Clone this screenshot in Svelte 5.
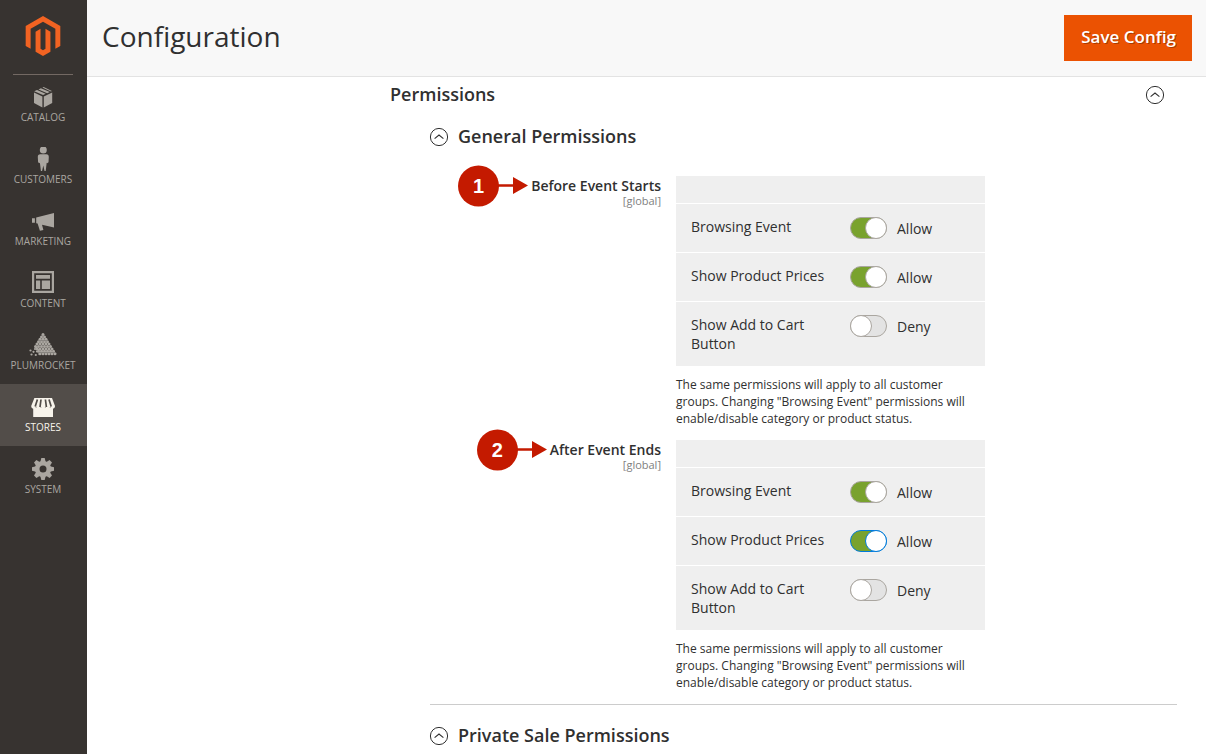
<script lang="ts">
  type Permission = { name: string; allow: boolean; active?: boolean };

  const menu = [
    { id: "catalog", label: "Catalog" },
    { id: "customers", label: "Customers" },
    { id: "marketing", label: "Marketing" },
    { id: "content", label: "Content" },
    { id: "plumrocket", label: "Plumrocket" },
    { id: "stores", label: "Stores" },
    { id: "system", label: "System" },
  ];
  const current = "stores";

  let fields: { id: string; label: string; step: number; rows: Permission[] }[] =
    $state([
      {
        id: "before",
        label: "Before Event Starts",
        step: 1,
        rows: [
          { name: "Browsing Event", allow: true },
          { name: "Show Product Prices", allow: true },
          { name: "Show Add to Cart Button", allow: false },
        ],
      },
      {
        id: "after",
        label: "After Event Ends",
        step: 2,
        rows: [
          { name: "Browsing Event", allow: true },
          { name: "Show Product Prices", allow: true, active: true },
          { name: "Show Add to Cart Button", allow: false },
        ],
      },
    ]);

  // Dots of the Plumrocket pyramid
  const dots: { x: number; y: number; r: number }[] = [];
  for (let row = 0; row < 9; row++) {
    for (let i = 0; i <= row; i++) {
      if (row > 5 && i < row - 5) continue;
      dots.push({ x: 14 + (i - row / 2) * 3, y: 1.5 + row * 2.4, r: 1.5 });
    }
  }
  const loose = [
    [6, 16], [8, 18.5], [4.5, 18.8], [1.5, 17.5], [10.5, 21],
    [6.8, 22], [2.5, 21.5], [10, 16.5], [7.5, 14.5],
  ];
  for (const [x, y] of loose) dots.push({ x, y, r: 1.1 });
</script>

{#snippet chevron()}
  <svg class="chevron" viewBox="0 0 20 20" width="20" height="20" fill="none" stroke="currentColor" aria-hidden="true">
    <circle cx="10" cy="10" r="8.6" stroke-width="1" />
    <path d="M5.6 11.6 10 8l4.4 3.6" stroke-width="1.1" />
  </svg>
{/snippet}

{#snippet icon(id: string)}
  <svg class="menu-icon" viewBox="0 0 28 24" width="28" height="24" fill="currentColor" aria-hidden="true">
    {#if id === "catalog"}
      <path d="M5 7.6 13.4 11.4V22.4L5 18zM23.2 7.6 14.8 11.4V22.4L23.2 18z" />
      <path d="M5.2 6.3 8 5l8.7 3.8-2.6 1.3zM9.5 4.4l2.4-1.1 8.9 3.7-2.6 1.2zM13.4 2.6l1.3-.5 8.2 3.8-1 .6z" />
    {:else if id === "customers"}
      <circle cx="14.3" cy="2.9" r="3.5" />
      <path d="M11.2 7.3h6.2c1.6 0 2.4 1 2.4 2.6l-.3 5.3-1.3 1.1-.5-.5-1 8.2h-1.2l-1.2-5.5-1.2 5.5h-1.2l-1-8.2-.5.5-1.3-1.1-.3-5.3c0-1.6.8-2.6 2.4-2.6z" />
    {:else if id === "marketing"}
      <path d="M3 9.2h2.9v4.6H3zM7.2 8.5 25 4v14.6l-12-2.8 1.4 5.3-3.5.7-2.3-7.2-1.4-.3z" />
    {:else if id === "content"}
      <path fill-rule="evenodd" d="M3 0h22v22H3zM5.2 2.2v17.6h17.6V2.2z" />
      <path d="M7 4h14v3.8H7zM7 9.4h4.2V18H7zM12.8 9.4H21V18h-8.2z" />
    {:else if id === "plumrocket"}
      {#each dots as dot}
        <circle cx={dot.x} cy={dot.y} r={dot.r} />
      {/each}
    {:else if id === "stores"}
      <path d="M4.2 12.5h19.8V22H4.2z" />
      <path d="M5.4 3h17.6l3 8c0 3.6-4.5 3.6-4.8.2-.4 3.4-4.6 3.4-4.8 0-.3 3.3-4.2 3.3-4.5 0-.3 3.4-4.4 3.4-4.8 0-.3 3.4-4.9 3.4-4.9-.2z" />
      <path d="m8.4 4.5-2.2 7M12 4.5l-1 7.5M16.4 4.5l1 7.5M20 4.5l2.2 7" stroke="#524d49" stroke-width="1.7" />
    {:else}
      <g transform="translate(14 12)">
        {#each [0, 45, 90, 135, 180, 225, 270, 315] as angle}
          <path d="M-2.7-7-1.7-11h3.4L2.7-7z" transform="rotate({angle})" />
        {/each}
        <circle r="5.8" fill="none" stroke="currentColor" stroke-width="4.6" />
      </g>
    {/if}
  </svg>
{/snippet}

<div class="page">
  <aside class="sidebar">
    <a class="logo" href="#dashboard" aria-label="Dashboard">
      <svg viewBox="0 0 24 24" width="40" height="40" fill="#f26322" aria-hidden="true">
        <path d="M12 24l-4.455-2.572v-12l2.97-1.715v12.001l1.485.902 1.485-.902V7.713l2.971 1.715v12L12 24zM22.391 6v12l-2.969 1.714V7.713L12 3.43 4.574 7.713v12.001L1.609 18V6L12 0l10.391 6z" />
      </svg>
    </a>
    <nav>
      {#each menu as item (item.id)}
        <a class="menu-item" class:current={item.id === current} href="#{item.id}">
          {@render icon(item.id)}
          <span>{item.label}</span>
        </a>
      {/each}
    </nav>
  </aside>

  <div class="main">
    <header class="page-header">
      <h1>Configuration</h1>
      <button class="save" type="button">Save Config</button>
    </header>

    <main class="config">
      <button class="section-toggle" type="button" aria-expanded="true">
        <span>Permissions</span>
        {@render chevron()}
      </button>

      <section class="group">
        <button class="group-toggle" type="button" aria-expanded="true">
          {@render chevron()}
          <span>General Permissions</span>
        </button>

        <div class="fields">
          {#each fields as field (field.id)}
            <div class="field">
              <div class="field-label">
                <div class="field-name" id="{field.id}-label">
                  <span class="callout">
                    <span class="callout-number">{field.step}</span>
                    <svg viewBox="0 0 30 18" width="30" height="18" fill="#c41a00" aria-hidden="true">
                      <path d="M0 7.7h15V.5L30 9 15 17.5v-7.2H0z" />
                    </svg>
                  </span>
                  {field.label}
                </div>
                <div class="scope">[global]</div>
              </div>

              <div class="field-value">
                <table aria-labelledby="{field.id}-label">
                  <thead>
                    <tr><td></td><td></td></tr>
                  </thead>
                  <tbody>
                    {#each field.rows as row, i}
                      <tr>
                        <td>{row.name}</td>
                        <td>
                          <label class="switch" class:active={row.active}>
                            <input type="checkbox" bind:checked={row.allow} id="{field.id}-{i}" />
                            <span>{row.allow ? "Allow" : "Deny"}</span>
                          </label>
                        </td>
                      </tr>
                    {/each}
                  </tbody>
                </table>
                <p class="note">
                  The same permissions will apply to all customer groups. Changing
                  "Browsing Event" permissions will enable/disable category or
                  product status.
                </p>
              </div>
            </div>
          {/each}
        </div>
      </section>

      <section class="group">
        <button class="group-toggle" type="button" aria-expanded="true">
          {@render chevron()}
          <span>Private Sale Permissions</span>
        </button>
      </section>
    </main>
  </div>
</div>

<style>
  :global(body) {
    background: #fff;
    color: #303030;
    font-family: "Open Sans", "Noto Sans", sans-serif;
    font-size: 14px;
    line-height: 19px;
  }

  .page {
    display: grid;
    grid-template-columns: 87px minmax(0, 1fr);
    min-height: 100vh;
  }

  button {
    border: none;
    background: none;
    padding: 0;
    font: inherit;
    color: inherit;
    cursor: pointer;
  }

  /* Sidebar */
  .sidebar {
    background: #373330;
  }

  .logo {
    display: flex;
    justify-content: center;
    margin: 0 14px 0 13px;
    padding: 16px 0 18px;
    border-bottom: 1px solid #736963;
  }

  nav {
    margin-top: -1px;
  }

  .menu-item {
    display: flex;
    flex-direction: column;
    align-items: center;
    gap: 1px;
    height: 51px;
    padding: 11px 1px 0 0;
    color: #aaa6a0;
    font-size: 10px;
    line-height: 14px;
    text-decoration: none;
    text-transform: uppercase;
  }

  .menu-item.current {
    background: #524d49;
    color: #f7f3eb;
  }

  /* Header */
  .page-header {
    display: flex;
    align-items: flex-start;
    justify-content: space-between;
    padding: 15px 14px 15px 15px;
    background: #f8f8f8;
    border-bottom: 1px solid #e3e3e3;
  }

  h1 {
    margin: 0;
    font-size: 28px;
    font-weight: 400;
    line-height: 42px;
  }

  .save {
    padding: 0 16px 2px 17px;
    background: #eb5202;
    color: #fff;
    font-size: 17px;
    font-weight: 600;
    line-height: 44px;
    text-shadow: 1px 1px 0 rgba(0, 0, 0, 0.3);
  }

  /* Sections */
  .config {
    padding: 5px 29px 0 303px;
  }

  .section-toggle,
  .group-toggle {
    display: flex;
    align-items: center;
    font-size: 18px;
    font-weight: 600;
    line-height: 24px;
  }

  .section-toggle {
    justify-content: space-between;
    width: 100%;
    padding-right: 12px;
  }

  .chevron {
    position: relative;
    top: 1px;
  }

  .group {
    margin-left: 40px;
    padding-top: 18px;
  }

  .group + .group {
    border-top: 1px solid #ccc;
  }

  .group-toggle {
    gap: 9px;
    margin-left: -1px;
  }

  .fields {
    display: grid;
    gap: 13px;
    padding: 28px 0 13px;
  }

  .field {
    display: grid;
    grid-template-columns: 231fr 309fr 177fr;
    gap: 15px;
  }

  .field-label {
    text-align: right;
  }

  .field-name {
    position: relative;
    display: inline-block;
    font-weight: 600;
  }

  .scope {
    color: #808080;
    font-size: 11px;
    line-height: 12px;
  }

  .callout {
    position: absolute;
    right: 100%;
    top: 50%;
    display: flex;
    align-items: center;
    margin-right: 3px;
    transform: translateY(-50%);
  }

  .callout-number {
    width: 41px;
    border-radius: 50%;
    background: #c41a00;
    color: #fff;
    font: bold 20px/41px "Liberation Sans", Arial, sans-serif;
    text-align: center;
  }

  .callout svg {
    margin-left: -1px;
  }

  table {
    width: 100%;
    table-layout: fixed;
    border-spacing: 0;
    background: #efefef;
  }

  td {
    padding: 13px 8px 13px 15px;
    vertical-align: top;
  }

  td + td {
    box-sizing: border-box;
    width: 150px;
  }

  tbody td {
    border-top: 1px solid #fff;
  }

  thead td {
    height: 27px;
    padding-top: 0;
    padding-bottom: 0;
  }

  .switch {
    display: flex;
    align-items: center;
    gap: 10px;
    height: 22px;
  }

  .switch input {
    appearance: none;
    box-sizing: border-box;
    width: 37px;
    height: 22px;
    margin: 0;
    border: 1px solid #aaa6a0;
    border-radius: 11px;
    background: #e3e3e3;
    cursor: pointer;
  }

  .switch input::before {
    content: "";
    display: block;
    box-sizing: border-box;
    width: 22px;
    height: 22px;
    margin: -1px;
    border: 1px solid #aaa6a0;
    border-radius: 50%;
    background: #fff;
  }

  .switch input:checked {
    background: #79a22e;
  }

  .switch input:checked::before {
    margin-left: 14px;
  }

  .switch.active input,
  .switch.active input::before {
    border-color: #007bdb;
  }

  .note {
    margin: 10px 0 0;
    font-size: 12px;
    line-height: 17px;
  }
</style>
